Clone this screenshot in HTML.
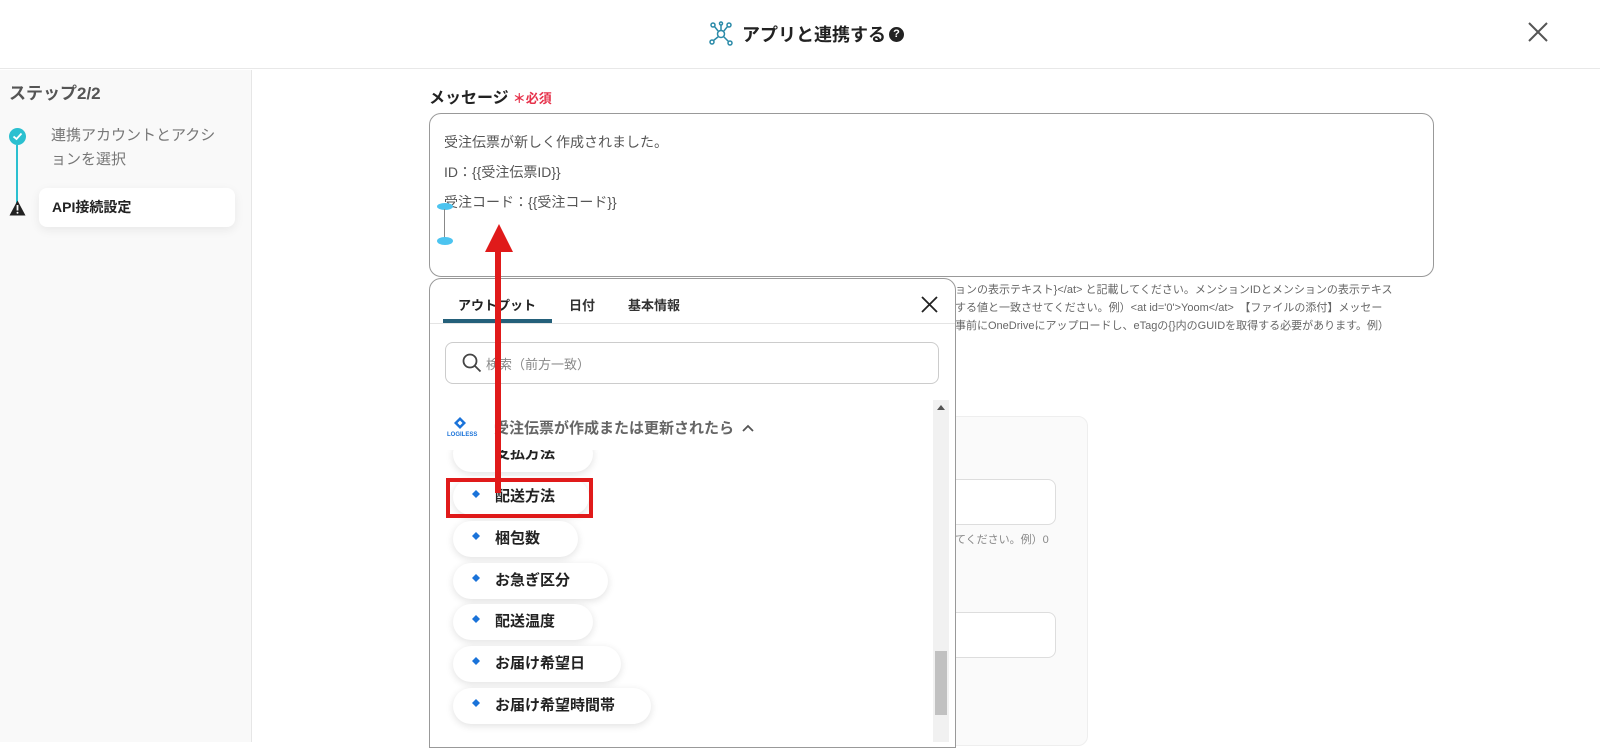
<!DOCTYPE html>
<html><head><meta charset="utf-8"><style>
*{box-sizing:border-box;margin:0;padding:0}
body{width:1600px;height:742px;overflow:hidden;background:#fff;font-family:"Liberation Sans","Noto Sans CJK JP",sans-serif;position:relative;color:#333}
.abs{position:absolute}
.hdr{left:0;top:0;width:1600px;height:69px;border-bottom:1px solid #e8e8e8;background:#fff}
.side{left:0;top:70px;width:252px;height:672px;background:#f9f9f9;border-right:1px solid #e6e6e6}
.pill{position:absolute;left:453px;height:36px;border-radius:18px;background:#fff;box-shadow:0 2px 8px rgba(0,0,0,.12);font-size:15px;font-weight:bold;color:#222;line-height:36px;padding-left:42px}
</style></head><body>
<div class="abs hdr"></div>
<svg class="abs" style="left:708px;top:21px" width="26" height="26" viewBox="0 0 26 26" fill="none" stroke="#2a8aa8" stroke-width="1.5"><circle cx="13" cy="13" r="3.5"/><circle cx="5" cy="4" r="2"/><circle cx="21" cy="4" r="2"/><circle cx="4" cy="21" r="2"/><circle cx="22" cy="22" r="2"/><circle cx="13" cy="2.5" r="1.5"/><path d="M6.5 5.5L10.5 10.5M19.5 5.5L15.5 10.5M5.5 19.5L10.5 15.5M20.5 20.5L15.5 15.5M13 4V9.5"/></svg>
<div class="abs" style="left:742px;top:21px;font-size:18px;font-weight:bold;color:#222;white-space:nowrap;display:flex;align-items:center">アプリと連携する<span style="display:inline-block;margin-left:3px;width:15px;height:15px;border-radius:50%;background:#222;color:#fff;font-size:11px;font-weight:bold;text-align:center;line-height:15px">?</span></div>
<svg class="abs" style="left:1528px;top:22px" width="20" height="20" viewBox="0 0 20 20" stroke="#555" stroke-width="2"><path d="M1 1L19 19M19 1L1 19"/></svg>

<div class="abs side"></div>
<div class="abs" style="left:9px;top:79px;font-size:17px;font-weight:bold;color:#555">ステップ2/2</div>
<div class="abs" style="left:9px;top:128px;width:17px;height:17px;border-radius:50%;background:#2bc0d0"></div>
<svg class="abs" style="left:12px;top:132px" width="11" height="9" viewBox="0 0 11 9" fill="none" stroke="#fff" stroke-width="1.8"><path d="M1.5 4.5L4.5 7L9.5 1.5"/></svg>
<div class="abs" style="left:16px;top:145px;width:2px;height:58px;background:#2bc0d0"></div>
<svg class="abs" style="left:9px;top:200px" width="17" height="16" viewBox="0 0 17 16"><path d="M8.5 0.5L16.5 15.5H0.5Z" fill="#222"/><path d="M8.5 5V10.5" stroke="#fff" stroke-width="1.8"/><circle cx="8.5" cy="12.8" r="1" fill="#fff"/></svg>
<div class="abs" style="left:51px;top:124px;font-size:15px;line-height:24px;color:#777;width:175px">連携アカウントとアクションを選択</div>
<div class="abs" style="left:39px;top:188px;width:196px;height:39px;background:#fff;border-radius:8px;box-shadow:0 3px 10px rgba(0,0,0,.07);font-size:14px;font-weight:bold;color:#222;line-height:39px;padding-left:13px">API接続設定</div>

<div class="abs" style="left:429px;top:84px;font-size:16px;font-weight:bold;color:#222">メッセージ<span style="color:#e6314a;font-size:13px;margin-left:4px">＊必須</span></div>
<div class="abs" style="left:429px;top:113px;width:1005px;height:164px;border:1px solid #999;border-radius:12px"></div>
<div class="abs" style="left:444px;top:127px;font-size:14px;line-height:30px;color:#555">受注伝票が新しく作成されました。<br>ID：{{受注伝票ID}}<br>受注コード：{{受注コード}}</div>
<div class="abs" style="left:437px;top:203px;width:16px;height:7px;border-radius:50%;background:#4cc4f0"></div>
<div class="abs" style="left:444px;top:209px;width:1px;height:30px;background:#888"></div>
<div class="abs" style="left:437px;top:237px;width:16px;height:8px;border-radius:50%;background:#4cc4f0"></div>
<div class="abs" style="left:955px;top:281px;font-size:11px;line-height:18px;color:#666;white-space:nowrap">ョンの表示テキスト}&lt;/at&gt; と記載してください。メンションIDとメンションの表示テキス<br>する値と一致させてください。例）&lt;at id='0'&gt;Yoom&lt;/at&gt;　【ファイルの添付】メッセー<br>事前にOneDriveにアップロードし、eTagの{}内のGUIDを取得する必要があります。例）</div>

<div class="abs" style="left:940px;top:416px;width:148px;height:330px;background:#fafafa;border:1px solid #eee;border-radius:10px"></div>
<div class="abs" style="left:940px;top:479px;width:116px;height:46px;background:#fff;border:1px solid #ddd;border-radius:8px"></div>
<div class="abs" style="left:955px;top:531px;font-size:11px;color:#888">てください。例）0</div>
<div class="abs" style="left:940px;top:612px;width:116px;height:46px;background:#fff;border:1px solid #ddd;border-radius:8px"></div>

<div class="abs" style="left:429px;top:278px;width:527px;height:470px;background:#fff;border:1px solid #999;border-radius:12px 12px 0 0"></div>
<div class="abs" style="left:458px;top:295px;font-size:13px;font-weight:bold;color:#222">アウトプット</div>
<div class="abs" style="left:569px;top:295px;font-size:13px;font-weight:bold;color:#333">日付</div>
<div class="abs" style="left:628px;top:295px;font-size:13px;font-weight:bold;color:#333">基本情報</div>
<div class="abs" style="left:443px;top:319px;width:109px;height:4px;background:#24607a"></div>
<div class="abs" style="left:430px;top:323px;width:525px;height:1px;background:#e4e4e4"></div>
<svg class="abs" style="left:921px;top:296px" width="17" height="17" viewBox="0 0 17 17" stroke="#222" stroke-width="1.8"><path d="M1 1L16 16M16 1L1 16"/></svg>
<div class="abs" style="left:445px;top:342px;width:494px;height:42px;border:1px solid #ccc;border-radius:8px"></div>
<svg class="abs" style="left:462px;top:353px" width="20" height="20" viewBox="0 0 20 20" fill="none" stroke="#444" stroke-width="1.8"><circle cx="8" cy="8" r="6.5"/><path d="M13 13L18.5 18.5"/></svg>
<div class="abs" style="left:486px;top:354px;font-size:13px;color:#888">検索（前方一致）</div>
<div class="abs" style="left:933px;top:400px;width:16px;height:342px;background:#f1f1f1"></div>
<div class="abs" style="left:937px;top:405px;width:0;height:0;border-left:4px solid transparent;border-right:4px solid transparent;border-bottom:5px solid #555"></div>
<div class="abs" style="left:935px;top:651px;width:12px;height:64px;background:#c1c1c1"></div>

<svg class="abs" style="left:449px;top:416px" width="22" height="22" viewBox="0 0 22 22"><path d="M11 1L17 7L11 13L5 7Z" fill="#1a73d9"/><path d="M11 4.5L13.5 7L11 9.5L8.5 7Z" fill="#fff"/></svg>
<div class="abs" style="left:447px;top:432px;font-size:6px;color:#1a73d9;font-weight:bold">LOGILESS</div>
<div class="abs" style="left:494px;top:417px;font-size:15px;font-weight:bold;color:#666">受注伝票が作成または更新されたら</div>
<svg class="abs" style="left:742px;top:424px" width="12" height="8" viewBox="0 0 12 8" fill="none" stroke="#555" stroke-width="1.8"><path d="M1 7L6 2L11 7"/></svg>

<div style="position:absolute;left:430px;top:450px;width:503px;height:26px;overflow:hidden"><div class="pill" style="left:23px;top:-14px;width:140px">支払方法</div></div>
<div class="pill" style="top:479px;width:136px">配送方法</div>
<div class="abs" style="left:446px;top:478px;width:147px;height:40px;border:4px solid #e01a1a"></div>
<div class="pill" style="top:521px;width:125px">梱包数</div>
<div class="pill" style="top:563px;width:155px">お急ぎ区分</div>
<div class="pill" style="top:604px;width:140px">配送温度</div>
<div class="pill" style="top:646px;width:168px">お届け希望日</div>
<div class="pill" style="top:688px;width:198px">お届け希望時間帯</div>
<svg class="abs" style="left:466px;top:488px" width="20" height="260" viewBox="0 0 20 260">
<g fill="#1a73d9"><path d="M10 2L14 6L10 10L6 6Z"/><path d="M10 44L14 48L10 52L6 48Z"/><path d="M10 86L14 90L10 94L6 90Z"/><path d="M10 127L14 131L10 135L6 131Z"/><path d="M10 169L14 173L10 177L6 173Z"/><path d="M10 211L14 215L10 219L6 215Z"/></g></svg>

<div class="abs" style="left:495px;top:248px;width:6px;height:245px;background:#e01a1a"></div>
<svg class="abs" style="left:484px;top:224px" width="30" height="28" viewBox="0 0 30 28"><path d="M15 0L29 28H1Z" fill="#e01a1a"/></svg>
</body></html>
